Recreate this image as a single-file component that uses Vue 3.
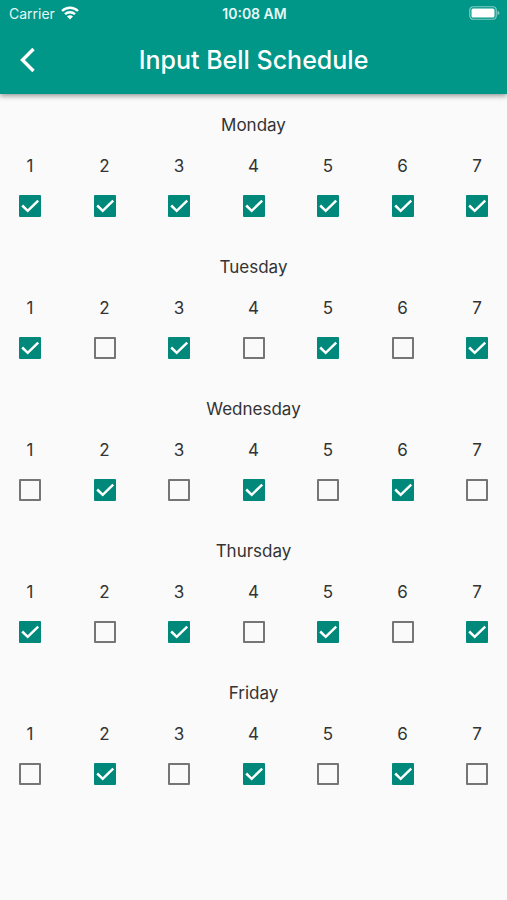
<script setup>
    import { ref } from 'vue'

    const periods = [1, 2, 3, 4, 5, 6, 7]

    const schedule = ref([
        { name: 'Monday', checked: [1, 2, 3, 4, 5, 6, 7] },
        { name: 'Tuesday', checked: [1, 3, 5, 7] },
        { name: 'Wednesday', checked: [2, 4, 6] },
        { name: 'Thursday', checked: [1, 3, 5, 7] },
        { name: 'Friday', checked: [2, 4, 6] }
    ])
</script>

<template>
    <div class="page">
        <header class="app-bar">
            <div class="status">
                <div class="carrier">
                    <span>Carrier</span>
                    <svg class="wifi" viewBox="0 0 18 14" aria-hidden="true">
                        <path d="M1 5 A11.5 11.5 0 0 1 17 5" />
                        <path d="M4 8.2 A7.2 7.2 0 0 1 14 8.2" />
                        <path class="dot" d="M9 13.6 L6 10.6 A4.2 4.2 0 0 1 12 10.6 Z" />
                    </svg>
                </div>
                <span class="time">10:08 AM</span>
                <svg class="battery" viewBox="0 0 31 14" aria-hidden="true">
                    <rect class="shell" x="0.75" y="0.75" width="26.5" height="12.5" rx="3.5" />
                    <rect class="charge" x="2.5" y="2.5" width="23" height="9" rx="1.5" />
                    <path class="tip" d="M28.5 4.8 Q30.5 5.6 30.5 7 Q30.5 8.4 28.5 9.2 Z" />
                </svg>
            </div>
            <div class="toolbar">
                <button class="back" type="button" aria-label="Back">
                    <svg viewBox="0 0 16 26" aria-hidden="true">
                        <path d="M13.5 2 L2.5 13 L13.5 24" />
                    </svg>
                </button>
                <h1>Input Bell Schedule</h1>
            </div>
        </header>

        <main>
            <section v-for="day in schedule" :key="day.name">
                <h2>{{ day.name }}</h2>
                <div class="periods">
                    <label v-for="n in periods" :key="n" class="period">
                        <span class="number">{{ n }}</span>
                        <span class="box">
                            <input type="checkbox" :value="n" v-model="day.checked" />
                            <svg viewBox="0 0 22 22" aria-hidden="true">
                                <path d="M3.2 10.5 L8.7 15.8 L19.2 5.6" />
                            </svg>
                        </span>
                    </label>
                </div>
            </section>
        </main>
    </div>
</template>

<style>
    body {
        margin: 0;
        background: #fafafa;
    }
</style>

<style scoped>
    .page {
        min-height: 100vh;
        background: #fafafa;
        color: #333;
        font-family: Inter, "Liberation Sans", sans-serif;
        font-size: 17px;
    }

    .app-bar {
        background: #009688;
        color: #fff;
        box-shadow: 0 2px 5px rgba(0, 0, 0, 0.4);
    }

    .status {
        display: grid;
        grid-template-columns: 1fr auto 1fr;
        align-items: center;
        height: 26px;
        padding: 0 7px 0 9px;
        font-size: 14px;
        color: #e6f7f5;
    }

    .carrier {
        display: flex;
        align-items: center;
        gap: 6px;
    }

    .wifi {
        width: 18px;
        height: 14px;
        fill: none;
        stroke: #fff;
        stroke-width: 2.4;

        .dot {
            fill: #fff;
            stroke: none;
        }
    }

    .time {
        font-weight: 600;
    }

    .battery {
        justify-self: end;
        width: 31px;
        height: 14px;

        .shell {
            fill: none;
            stroke: #80cbc4;
            stroke-width: 1.2;
        }

        .charge {
            fill: #fff;
        }

        .tip {
            fill: #80cbc4;
        }
    }

    .toolbar {
        display: grid;
        grid-template-columns: 56px 1fr 56px;
        align-items: center;
        height: 68px;
    }

    .back {
        display: flex;
        align-items: center;
        justify-content: center;
        height: 56px;
        padding: 0;
        border: 0;
        background: none;
        cursor: pointer;

        svg {
            width: 16px;
            height: 26px;
            fill: none;
            stroke: #fff;
            stroke-width: 3.4;
        }
    }

    h1 {
        margin: 0;
        font-size: 25px;
        font-weight: 500;
        line-height: 32px;
        text-align: center;
    }

    h2 {
        margin: 0;
        font-size: 17px;
        font-weight: 400;
        line-height: 62px;
        text-align: center;
    }

    .periods {
        display: flex;
        justify-content: space-between;
    }

    .period {
        display: flex;
        flex-direction: column;
        align-items: center;
        width: 60px;
        cursor: pointer;
    }

    .number {
        line-height: 20px;
    }

    .box {
        display: grid;
        place-items: center;
        width: 60px;
        height: 60px;

        input,
        svg {
            grid-area: 1 / 1;
            width: 22px;
            height: 22px;
            margin: 0;
        }

        input {
            appearance: none;
            box-sizing: border-box;
            border: 2px solid #757575;
            border-radius: 1px;
            cursor: pointer;
        }

        input:checked {
            border-color: #00897b;
            background: #00897b;
        }

        svg {
            visibility: hidden;
            fill: none;
            stroke: #fff;
            stroke-width: 2.5;
            pointer-events: none;
        }

        input:checked + svg {
            visibility: visible;
        }
    }
</style>
